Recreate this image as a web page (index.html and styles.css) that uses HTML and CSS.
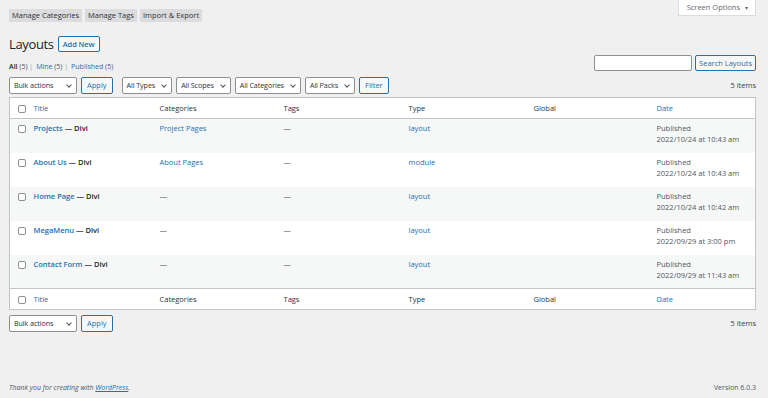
FILE: index.html
```html
<!DOCTYPE html>
<html lang="en">
<head>
	<meta charset="UTF-8">
	<title>Layouts</title>
	<link rel="stylesheet" href="styles.css">
</head>
<body>
	<div id="page">
		<!-- 顶部标签与屏幕选项 -->
		<div class="topbar">
			<div class="tabs">
				<a href="#" class="tab">Manage Categories</a>
				<a href="#" class="tab">Manage Tags</a>
				<a href="#" class="tab">Import &amp; Export</a>
			</div>
			<a href="#" class="screen_opts">Screen Options <span class="caret">&#9662;</span></a>
		</div>
		<!-- 标题 -->
		<div class="heading">
			<h1>Layouts</h1>
			<a href="#" class="btn add_new">Add New</a>
		</div>
		<div class="subrow">
			<ul class="subsub">
				<li><a href="#" class="current">All <span class="count">(5)</span></a> |</li>
				<li><a href="#">Mine <span class="count">(5)</span></a> |</li>
				<li><a href="#">Published <span class="count">(5)</span></a></li>
			</ul>
			<div class="search">
				<input type="text" class="search_input">
				<a href="#" class="btn">Search Layouts</a>
			</div>
		</div>
		<!-- 操作栏 -->
		<div class="tablenav">
			<div class="actions">
				<span class="select bulk">Bulk actions</span>
				<a href="#" class="btn">Apply</a>
			</div>
			<div class="actions">
				<span class="select">All Types</span>
				<span class="select">All Scopes</span>
				<span class="select">All Categories</span>
				<span class="select">All Packs</span>
				<a href="#" class="btn">Filter</a>
			</div>
			<span class="items">5 items</span>
		</div>
		<!-- 列表 -->
		<table class="list">
			<thead>
				<tr>
					<th class="col_cb"><span class="cb"></span></th>
					<th class="col_title"><a href="#">Title</a></th>
					<th class="col_cat">Categories</th>
					<th class="col_tags">Tags</th>
					<th class="col_type">Type</th>
					<th class="col_global">Global</th>
					<th class="col_date"><a href="#">Date</a></th>
				</tr>
			</thead>
			<tbody>
				<tr>
					<td class="col_cb"><span class="cb"></span></td>
					<td><a href="#" class="row_title">Projects</a><strong> — Divi</strong></td>
					<td><a href="#">Project Pages</a></td>
					<td class="dash">—</td>
					<td><a href="#">layout</a></td>
					<td></td>
					<td class="date">Published<br>2022/10/24 at 10:43 am</td>
				</tr>
				<tr>
					<td class="col_cb"><span class="cb"></span></td>
					<td><a href="#" class="row_title">About Us</a><strong> — Divi</strong></td>
					<td><a href="#">About Pages</a></td>
					<td class="dash">—</td>
					<td><a href="#">module</a></td>
					<td></td>
					<td class="date">Published<br>2022/10/24 at 10:43 am</td>
				</tr>
				<tr>
					<td class="col_cb"><span class="cb"></span></td>
					<td><a href="#" class="row_title">Home Page</a><strong> — Divi</strong></td>
					<td class="dash">—</td>
					<td class="dash">—</td>
					<td><a href="#">layout</a></td>
					<td></td>
					<td class="date">Published<br>2022/10/24 at 10:42 am</td>
				</tr>
				<tr>
					<td class="col_cb"><span class="cb"></span></td>
					<td><a href="#" class="row_title">MegaMenu</a><strong> — Divi</strong></td>
					<td class="dash">—</td>
					<td class="dash">—</td>
					<td><a href="#">layout</a></td>
					<td></td>
					<td class="date">Published<br>2022/09/29 at 3:00 pm</td>
				</tr>
				<tr>
					<td class="col_cb"><span class="cb"></span></td>
					<td><a href="#" class="row_title">Contact Form</a><strong> — Divi</strong></td>
					<td class="dash">—</td>
					<td class="dash">—</td>
					<td><a href="#">layout</a></td>
					<td></td>
					<td class="date">Published<br>2022/09/29 at 11:43 am</td>
				</tr>
			</tbody>
			<tfoot>
				<tr>
					<th class="col_cb"><span class="cb"></span></th>
					<th><a href="#">Title</a></th>
					<th>Categories</th>
					<th>Tags</th>
					<th>Type</th>
					<th>Global</th>
					<th><a href="#">Date</a></th>
				</tr>
			</tfoot>
		</table>
		<div class="tablenav bottom">
			<div class="actions">
				<span class="select bulk">Bulk actions</span>
				<a href="#" class="btn">Apply</a>
			</div>
			<span class="items">5 items</span>
		</div>
		<!-- 页脚 -->
		<div class="footer">
			<em>Thank you for creating with <a href="#">WordPress</a>.</em>
			<span>Version 6.0.3</span>
		</div>
	</div>
</body>
</html>
```

FILE: styles.css
```css
/*reset*/
body, div, ul, li, h1, table, th, td, input{
	margin: 0;
	padding: 0;
}
li{
	list-style: none;
}
a{
	text-decoration: none;
	color: #2271b1;
}
body{
	background: #f0f0f1;
	color: #3c434a;
	font: 7.5px/1.4 "Open Sans", "Noto Sans", sans-serif;
}
/*main*/
#page{
	display: flex;
	flex-direction: column;
	height: 398px;
	padding: 0 12px 0 9px;
	box-sizing: border-box;
}
.topbar{
	display: flex;
	justify-content: space-between;
	align-items: flex-start;
}
.tabs{
	display: flex;
	gap: 3px;
	margin-top: 9px;
}
.tab{
	height: 13px;
	padding: 0 3px;
	line-height: 13px;
	background: #dcdcde;
	color: #2c3338;
}
.screen_opts{
	height: 15px;
	padding: 0 7px 0 8px;
	background: #fff;
	border: 1px solid #dcdcde;
	border-top: none;
	line-height: 15px;
	color: #646970;
}
.caret{
	font-size: 6px;
	margin-left: 3px;
}
.heading{
	display: flex;
	align-items: center;
	gap: 4px;
	margin-top: 14px;
}
h1{
	font-size: 13px;
	font-weight: 400;
	letter-spacing: -0.35px;
	color: #1d2327;
	line-height: 16px;
}
.btn{
	display: inline-block;
	height: 14px;
	padding: 0 5px;
	border: 1px solid #2271b1;
	border-radius: 2px;
	background: #f6f7f7;
	line-height: 14px;
	color: #2271b1;
}
.add_new{
	padding: 0 4px;
	font-weight: 600;
	letter-spacing: -0.1px;
}
.subrow{
	display: flex;
	justify-content: space-between;
	align-items: flex-end;
	margin-top: 3px;
}
.subsub{
	display: flex;
	gap: 3px;
	margin-bottom: -1px;
	font-size: 7px;
	color: #a7aaad;
	line-height: 10px;
}
.subsub .current{
	font-weight: 600;
	color: #1d2327;
}
.subsub .count{
	color: #50575e;
	font-weight: 400;
}
.search{
	display: flex;
	gap: 3px;
}
.search_input{
	width: 98px;
	height: 16px;
	border: 1px solid #8c8f94;
	border-radius: 2px;
	background: #fff;
	box-sizing: border-box;
}
.search .btn{
	height: 14px;
	padding: 0 3px;
	line-height: 14px;
}
.tablenav{
	display: flex;
	align-items: center;
	gap: 9px;
	margin-top: 6px;
	height: 17px;
}
.tablenav .items{
	margin-left: auto;
	color: #3c434a;
}
.actions{
	display: flex;
	gap: 4px;
}
.select{
	display: inline-flex;
	align-items: center;
	height: 17px;
	padding: 0 5px 0 4px;
	border: 1px solid #8c8f94;
	border-radius: 2px;
	background: #fff;
	font-size: 7.2px;
	letter-spacing: -0.1px;
	color: #2c3338;
	box-sizing: border-box;
}
.select:after{
	content: "";
	width: 3px;
	height: 3px;
	margin: -2px 0 0 7px;
	border-right: 1px solid #50575e;
	border-bottom: 1px solid #50575e;
	transform: rotate(45deg);
}
.bulk{
	width: 68px;
	justify-content: space-between;
}
.actions .btn{
	height: 15px;
	line-height: 15px;
	padding: 0 5px;
}
/*表格*/
.list{
	width: 100%;
	margin-top: 3px;
	border: 1px solid #c3c4c7;
	border-collapse: collapse;
	background: #fff;
	table-layout: fixed;
}
.list th, .list td{
	box-sizing: border-box;
}
.list th{
	height: 21px;
	padding: 0 5px 0 0;
	font-weight: 400;
	text-align: left;
	color: #2c3338;
}
.list thead th{
	border-bottom: 1px solid #c3c4c7;
}
.list tfoot th{
	border-top: 1px solid #c3c4c7;
}
.list td{
	height: 34px;
	padding: 4px 5px 6px 0;
	vertical-align: top;
	line-height: 11px;
	white-space: nowrap;
}
.list tbody tr:nth-child(odd){
	background: #f6f7f7;
}
.col_cb{
	width: 24px;
}
.list .col_cb{
	padding: 0;
	text-align: center;
}
.list td.col_cb{
	padding-top: 4px;
}
.col_title{
	width: 126px;
}
.col_cat{
	width: 124px;
}
.col_tags, .col_type{
	width: 125px;
}
.col_global{
	width: 123px;
}
.cb{
	display: inline-block;
	width: 8px;
	height: 8px;
	border: 1px solid #8c8f94;
	border-radius: 2px;
	background: #fff;
	vertical-align: middle;
	box-sizing: border-box;
}
.row_title{
	font-weight: 600;
}
.list strong{
	font-weight: 600;
	color: #1d2327;
}
.dash, .date{
	color: #50575e;
}
.bottom{
	margin-top: 5px;
}
.footer{
	display: flex;
	justify-content: space-between;
	margin-top: auto;
	padding: 0 0 4px 0;
	color: #50575e;
	font-size: 7px;
	line-height: 12px;
}
.footer a{
	text-decoration: underline;
}
```
